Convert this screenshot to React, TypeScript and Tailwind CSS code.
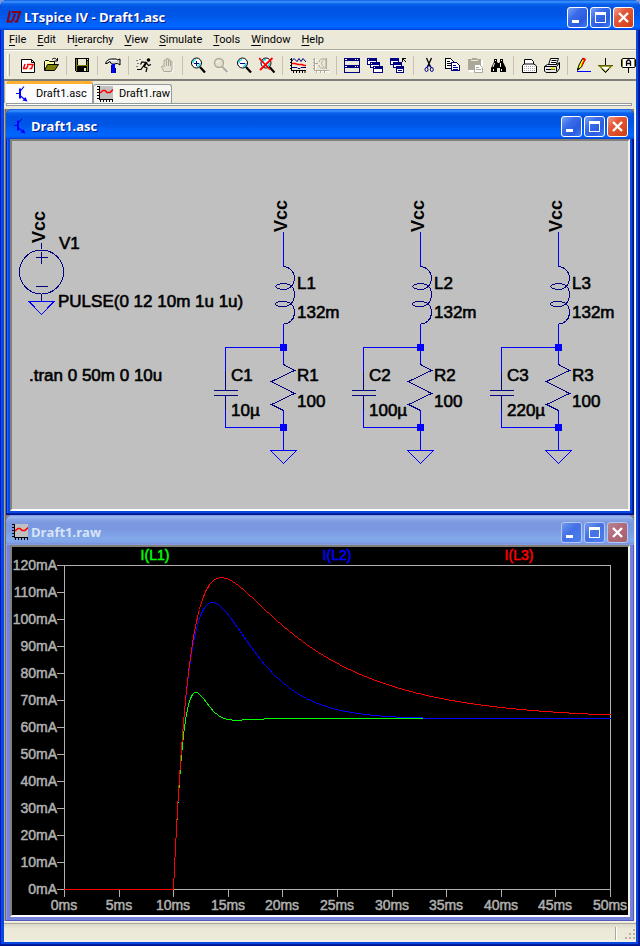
import React from "react";

const UI_FONT = "font-['Roboto','DejaVu_Sans_Condensed',sans-serif]";
const TITLE_FONT = "font-['Open_Sans','DejaVu_Sans_Condensed',sans-serif]";
const NAVY = "#000080";

/* ---------- small drawings ---------- */

function LogoIcon() {
  return (
    <svg className="h-4 w-4 shrink-0" viewBox="0 0 16 16" fill="none" stroke="#8b0010" strokeWidth="2" aria-hidden="true">
      <path d="M5 2 2.500 12.500h5" />
      <path d="M7 3h8l-3 9.500H9.500M10 5 7.500 12" />
    </svg>
  );
}

function TransistorIcon() {
  return (
    <svg className="h-4 w-4 shrink-0" viewBox="0 0 16 16" fill="none" stroke="#0000ff" aria-hidden="true">
      <path d="M2 7.500h4M6 5.500 10 .5M6 9.500l6 5" strokeWidth="1.200" />
      <path d="M6 2.500v10" strokeWidth="2" />
      <path d="m11.500 11 2 4.500-5-1z" fill="#0000ff" stroke="none" />
    </svg>
  );
}

function PlotIcon() {
  return (
    <svg className="h-4 w-4 shrink-0" viewBox="0 0 16 16" fill="none" aria-hidden="true">
      <path d="M2 0h14v13H2z" fill="#c0c0c0" />
      <g shapeRendering="crispEdges" stroke="#000">
        <path d="M2.500 0v14M2 13.500h14M0 .5h2M0 3.500h2M0 6.500h2M0 9.500h2M0 12.500h2" />
        <path d="M3.500 14v2M6.500 14v2M9.500 14v2M12.500 14v2M15.500 14v2" />
      </g>
      <path d="m3 7 3-2.500h2l2 2h3l3-3" stroke="#f00" strokeWidth="1.600" />
    </svg>
  );
}

const icons: Record<string, React.ReactNode> = {
  "New schematic": (
    <>
      <path d="M1.500 2.500h10l3 3v10h-13z" fill="#fff" stroke="#000" />
      <path d="M11.500 2.500v3h3" stroke="#000" />
      <path d="m5 7-1.500 4.500h3L8 8.500M7 7.500h6l-1.500 4H9.500" stroke="#f00" strokeWidth="1.500" />
    </>
  ),
  Open: (
    <>
      <path d="M1.500 13V4.500l1-1h3l1 1h5V8" fill="#ffffa0" stroke="#000" />
      <path d="m1.500 13.500 3-6h11l-4 6z" fill="#808000" stroke="#000" />
      <path d="M9 2.500c2-2 4-1.500 5 1M14.500 1v3h-3" stroke="#000" />
    </>
  ),
  Save: (
    <g shapeRendering="crispEdges">
      <path d="M1 1h14v14H2l-1-1z" fill="#000" />
      <path d="M2 2h1v12H2zM13 4h1v10h-1zM3 8h10v1H3z" fill="#808000" />
      <path d="M4 2h8v6H4z" fill="#ece9d8" />
      <path d="M10 11h2v3h-2zM13 2h1v1h-1z" fill="#ece9d8" />
    </g>
  ),
  "Control panel": (
    <>
      <path d="M.5 6.500c1-3 3-4.500 6-4.500h5l1 1 2.500-1v6l-2.500-1.500H11L10 7H6.500L5 4.500 2 6.500z" fill="#d8d8d8" stroke="#000" />
      <path d="M4 3.500h8" stroke="#fff" />
      <path d="M7 7h3v9H7z" fill="#0000ff" />
      <path d="M6.500 8v8M10.500 11v5" stroke={NAVY} />
    </>
  ),
  Run: (
    <>
      <circle cx="12.500" cy="3" r="1.800" fill="#000" />
      <path d="m10.500 5-3 5" stroke="#000" strokeWidth="2.200" />
      <path d="M10 5.500 6 5 4.500 7.500M10.500 6l2 2.500 2.500-1M8 9.500l3 1.500-1 4M7 9.500 5 12.500H1" stroke="#000" strokeWidth="1.200" />
      <path d="M0 3.500h2M3 2.500h3M1 6.500h2M0 9.500h3" stroke="#808080" strokeDasharray="2 1" />
    </>
  ),
  Halt: (
    <>
      <path d="M6 15.500 2.500 10c0-1 1.500-1.500 2.500 0V4c0-1.500 2-1.500 2 0V2.500c0-1.500 2-1.500 2 0V3c0-1.500 2-1.500 2 0v2c0-1.500 2-1.500 2 0v7l-1 3.500z" fill="#ece9d8" stroke="#fff" transform="translate(1 1)" />
      <path d="M5 14.500 2.500 10c0-1 1.500-1.500 2.500 0V4c0-1.500 2-1.500 2 0V2.500c0-1.500 2-1.500 2 0V3c0-1.500 2-1.500 2 0v2c0-1.500 2-1.500 2 0v7l-1 2.500zM7.500 4v5M9.500 3v6M11.500 4v5" fill="#e4e1d0" stroke="#aca899" />
    </>
  ),
  "Zoom in": (
    <>
      <circle cx="6.500" cy="6" r="5" fill="#fff" stroke="#000" />
      <path d="M3 6a3.500 3.500 0 0 1 3-3.500M7 9.500A3.500 3.500 0 0 0 10 6" stroke="#00d8e8" strokeWidth="1.200" />
      <path d="M4 6.500h5M6.500 4v5" stroke={NAVY} />
      <path d="m10 10 5 5.500" stroke="#000" strokeWidth="2.200" />
    </>
  ),
  Pan: (
    <>
      <circle cx="6.500" cy="7" r="4.500" stroke="#fff" />
      <circle cx="6" cy="6" r="4.500" fill="#e4e1d0" stroke="#aca899" strokeWidth="1.400" />
      <path d="m10.500 10.500 5 5" stroke="#fff" strokeWidth="2.500" />
      <path d="m9.500 10 5 5" stroke="#aca899" strokeWidth="2" />
      <path d="M3.500 6 6 3.500" stroke="#fff" />
    </>
  ),
  "Zoom out": (
    <>
      <circle cx="6.500" cy="6" r="5" fill="#fff" stroke="#000" />
      <path d="M3 6a3.500 3.500 0 0 1 3-3.500M7 9.500A3.500 3.500 0 0 0 10 6" stroke="#00d8e8" strokeWidth="1.200" />
      <path d="M4 6.500h5" stroke={NAVY} />
      <path d="m10 10 5 5.500" stroke="#000" strokeWidth="2.200" />
    </>
  ),
  "Zoom full extents": (
    <>
      <circle cx="7" cy="6" r="5" fill="#fff" stroke="#000" />
      <path d="M3.500 6A3.500 3.500 0 0 1 7 2.500M7 9.500A3.500 3.500 0 0 0 10.500 6" stroke="#00d8e8" strokeWidth="1.400" />
      <path d="m10.500 10 5 5.500" stroke="#000" strokeWidth="2.200" />
      <path d="m0 1 11 11.500M13.500 1 1 13" stroke="#f00" strokeWidth="1.800" />
    </>
  ),
  "Pick visible traces": (
    <>
      <path d="M1.500 1v13M1 13.500h15" stroke="#000" />
      <path d="M0 2.500h1M0 5.500h1M0 8.500h1M0 11.500h1M3.500 14v2M6.500 14v2M9.500 14v2M12.500 14v2M15 14v2" stroke="#000" />
      <path d="m2 4 2-2.500 3 3 2-3 2 3 2-3L16 5" stroke={NAVY} />
      <path d="M2 6.500h3l3 1h4l2 1h2" stroke="#f00" strokeWidth="1.400" />
      <path d="M2 10.500h5l1 1h2l1-1h5" stroke={NAVY} />
    </>
  ),
  FFT: (
    <>
      <path d="M2.500 2v13M2 14.500h14M4.500 15v1M8.500 15v1M12.500 15v1M15.500 15v1" stroke="#fff" />
      <path d="M1.500 1v13M1 13.500h15M0 2.500h1M0 5.500h1M0 8.500h1M0 11.500h1M3.500 14v2M7.500 14v2M11.500 14v2M2 6.500h3M6 5c1-4 4-3 7-3v9c-3 0-7 1-7-3M10.500 3C8 5 8 8 11 10M13.500 1v11" stroke="#aca899" />
    </>
  ),
  "Tile windows": (
    <g shapeRendering="crispEdges">
      <path d="M.5 1.500h15v14H.5z" fill="#ece9d8" stroke={NAVY} />
      <path d="M0 1h16v3H0zM0 8h16v3H0z" fill={NAVY} />
      <path d="M1 2h2v1H1zM11 2h1v1h-1zM13 2h1v1h-1zM1 9h2v1H1zM11 9h1v1h-1zM13 9h1v1h-1z" fill="#fff" />
    </g>
  ),
  "Cascade windows": (
    <g shapeRendering="crispEdges" stroke={NAVY} fill="#fff">
      <path d="M.5 1.500h9v6h-9zM3.500 5.500h9v5h-9zM6.500 9.500h9v6h-9z" />
      <path d="M0 2.500h10M3 6.500h10M6 10.500h10" strokeWidth="2" />
      <path d="M1 2.500h1M4 6.500h1M7 10.500h1" stroke="#fff" />
    </g>
  ),
  "Close all windows": (
    <g shapeRendering="crispEdges" stroke={NAVY} fill="#fff">
      <path d="M.5 1.500h8v6h-8zM3.500 5.500h8v5h-8zM6.500 9.500h7v6h-7z" />
      <path d="M0 2.500h9M3 6.500h9M6 10.500h8" strokeWidth="2" />
      <path d="M8 13.500h4" />
      <path d="M12.500 5V1.500H16M13 2l3 3" stroke="#000" fill="none" />
    </g>
  ),
  Cut: (
    <>
      <path d="m5.500 1 4 9M10.500 1l-4 9" stroke="#000" strokeWidth="1.300" />
      <path d="m7.500 8-2 3M8.500 8l2 3" stroke={NAVY} strokeWidth="1.300" />
      <ellipse cx="5.500" cy="12.500" rx="1.500" ry="2" stroke={NAVY} />
      <ellipse cx="10.800" cy="12.500" rx="1.500" ry="2" stroke={NAVY} />
    </>
  ),
  Copy: (
    <g shapeRendering="crispEdges">
      <path d="M1.500 1.500h5l3 3v7h-8z" fill="#fff" stroke="#000" />
      <path d="M3 4.500h3M3 6.500h4M3 8.500h4" stroke="#000" />
      <path d="M7.500 5.500h5l3 3v5h-8z" fill="#fff" stroke={NAVY} />
      <path d="M9 8.500h3M9 10.500h5M9 12.500h5" stroke={NAVY} />
    </g>
  ),
  Paste: (
    <>
      <path d="M2 3h14v12H2z" fill="#fff" />
      <path d="M1 2h4V1h5v1h4v11H1z" fill="#aca899" />
      <path d="M4 3.500h7" stroke="#ece9d8" />
      <path d="M7.500 7.500h5l3 3v5h-8z" fill="#fff" stroke="#aca899" />
      <path d="M9 10.500h3M9 12.500h5" stroke="#aca899" />
    </>
  ),
  Find: (
    <>
      <path d="M4 2h3v3l1 1h1l1-1V2h3v3l3 6v4h-6v-4H7v4H1v-4l3-6z" fill="#000" />
      <path d="M4.500 6 3 10M10.500 6v4M3.500 12v2M11.500 12v2M5.500 3v1M11.500 3v1" stroke="#fff" />
    </>
  ),
  "Print setup": (
    <>
      <path d="M3.500 7.500v-5h7l2 2v3" fill="#fff" stroke="#000" />
      <path d="M1.500 8.500 3 7h10l2.500 2v6.500h-14z" fill="#fff" stroke="#000" />
      <path d="M3 9.500h11M3 11.500h11M3 13.500h11" stroke="#aaa" strokeDasharray="1 1" />
    </>
  ),
  Print: (
    <>
      <path d="m4.500 8 2-6.500h8L12 8" fill="#fff" stroke="#000" />
      <path d="M7.500 3.500h5M7 5.500h5" stroke="#000" />
      <path d="m.5 9.500 3-2h9l3-2v6l-3 4H2l-1.500-1.500z" fill="#e8e8e8" stroke="#000" />
      <path d="M.5 9.500h12v5M13 9l2.500-3M2 12.500h9" stroke="#000" />
      <path d="M7 11.500h4" stroke="#e8e800" strokeWidth="2" />
    </>
  ),
  "Draw wire": (
    <>
      <path d="M2 14.500h14" stroke="#0000ff" />
      <path d="M2.500 13 4 8l3.500-6.500 2.500 1L6.500 10z" fill="#ff0" stroke="#000" />
      <path d="m7 8 3-5.500" stroke="#f00" strokeWidth="1.400" />
      <path d="m7.500 1.500 3 1.500" stroke="#f00" strokeWidth="2" />
      <path d="m2 14 .5-3 2 1z" fill="#000" />
    </>
  ),
  "Place ground": (
    <>
      <path d="M7.500 1v7M0 8.500h15" stroke="#000" />
      <path d="m1.500 9 6 6 6-6z" fill="#fff" stroke="#808000" strokeWidth="1.400" />
      <path d="m4 12 3.500 3.500L11 12" stroke="#000" />
    </>
  ),
  "Label net": (
    <>
      <path d="m.5 2.500 1-1h12l1 1v7l-1 1h-12l-1-1z" fill="#fff" stroke="#000" />
      <path d="M1.500 2v8M13.500 2v8" stroke="#808000" />
      <path d="M7.500 11v5" stroke="#000" />
      <path d="M5.500 9V4.500L7 3h1l1.500 1.500V9M5.500 6.500h4" stroke="#000" strokeWidth="1.300" />
    </>
  ),
};

const toolGroups = [
  ["New schematic", "Open"],
  ["Save"],
  ["Control panel"],
  ["Run", "Halt"],
  ["Zoom in", "Pan", "Zoom out", "Zoom full extents"],
  ["Pick visible traces", "FFT"],
  ["Tile windows", "Cascade windows", "Close all windows"],
  ["Cut", "Copy", "Paste", "Find"],
  ["Print setup", "Print"],
  ["Draw wire", "Place ground", "Label net"],
];

/* ---------- window chrome ---------- */

function CaptionButton({ kind, dim }: { kind: "Minimize" | "Maximize" | "Close"; dim?: boolean }) {
  const blue = "bg-[linear-gradient(135deg,#7ba2f0_0%,#3a6cea_35%,#2a5be0_70%,#3f7df5_100%)]";
  const blueDim = "bg-[linear-gradient(135deg,#6f98ee_0%,#4470e4_45%,#4a80f0_100%)]";
  const red = "bg-[linear-gradient(135deg,#f0a08a_0%,#e3593a_35%,#d94820_75%,#c83a10_100%)]";
  const redDim = "bg-[linear-gradient(135deg,#b88494_0%,#b06878_50%,#a8606c_100%)]";
  const fill = kind === "Close" ? (dim ? redDim : red) : dim ? blueDim : blue;
  const edge = dim ? "border-[#b4c8f4]" : "border-white";
  return (
    <button type="button" aria-label={kind} className={`flex h-[21px] w-[21px] items-center justify-center rounded-[3px] border ${edge} ${fill}`}>
      <svg className="h-[19px] w-[19px]" viewBox="0 0 19 19" fill="none" stroke="#fff" aria-hidden="true">
        {kind === "Minimize" && <path d="M4 13.500h7" strokeWidth="3" />}
        {kind === "Maximize" && (
          <g shapeRendering="crispEdges">
            <path d="M4.500 4.500h10v10h-10z" />
            <path d="M4 5.500h11" strokeWidth="3" />
          </g>
        )}
        {kind === "Close" && <path d="m5 5 9 9M14 5l-9 9" strokeWidth="2.400" />}
      </svg>
    </button>
  );
}

function TitleBar({ title, icon, dim, main }: { title: string; icon: React.ReactNode; dim?: boolean; main?: boolean }) {
  const active =
    "bg-[linear-gradient(#0a5ae0_0%,#3d95ff_6%,#0a62ec_13%,#0054e3_25%,#0055e5_50%,#0062f8_72%,#0066ff_88%,#005bf5_94%,#003dd7_100%)] text-white";
  const inactive =
    "bg-[linear-gradient(#7b99e1_0%,#9cb8ee_7%,#88a6e6_14%,#7a96df_28%,#7b99e1_50%,#82a9e9_80%,#80a5e7_90%,#7a93df_96%,#8ea4e4_100%)] text-[#d8e4f8]";
  return (
    <div className={`flex h-[30px] items-center rounded-t-[7px] pr-1.5 pt-1 ${main ? "pl-[5px]" : "pl-1.5"} ${dim ? inactive : active}`}>
      {icon}
      <h2 className={`min-w-0 flex-1 truncate pl-[3px] text-[13px] font-bold ${TITLE_FONT} ${dim ? "" : "[text-shadow:1px_1px_#0a1883]"}`}>{title}</h2>
      <div className="flex shrink-0 gap-0.5">
        <CaptionButton kind="Minimize" dim={dim} />
        <CaptionButton kind="Maximize" dim={dim} />
        <CaptionButton kind="Close" dim={dim} />
      </div>
    </div>
  );
}

function ChildWindow({ title, icon, dim, children }: { title: string; icon: React.ReactNode; dim?: boolean; children: React.ReactNode }) {
  const frame = dim
    ? "bg-[#7482dc] shadow-[inset_-1px_-1px_#5458b8,inset_1px_0_#8c98e0]"
    : "bg-[#0848e0] shadow-[inset_-1px_-1px_#00138c,inset_1px_0_#0019cf,inset_-2px_-2px_#0020a8,inset_2px_0_#166aee]";
  return (
    <section aria-label={title} className={`rounded-t-[7px] ${frame}`}>
      <TitleBar title={title} icon={icon} dim={dim} />
      <div className="px-1 pb-1">
        <div className="border-2 border-b-white border-l-[#808078] border-r-[#f4f2e8] border-t-[#808078]">{children}</div>
      </div>
    </section>
  );
}

/* ---------- schematic ---------- */

const branches = [
  { n: 1, x: 283, capX: 225, cap: "10µ" },
  { n: 2, x: 420, capX: 363, cap: "100µ" },
  { n: 3, x: 558, capX: 501, cap: "220µ" },
];

function Branch({ n, x, capX, cap }: { n: number; x: number; capX: number; cap: string }) {
  const c = x + 0.5;
  const k = capX + 0.5;
  return (
    <g>
      <g stroke="#0000ff" shapeRendering="crispEdges">
        <path d={`M${c} 232V267M${c} 324V365M${c} 410V450M${k} 372V347.500H${c}M${k} 410V427.500H${c}`} />
        <path d={`M${c - 13} 450.500h26l-13 13z`} />
        <path d={`M${x - 3} 344h7v7h-7zM${x - 3} 424h7v7h-7z`} fill="#0000ff" stroke="none" />
      </g>
      <g stroke={NAVY} shapeRendering="crispEdges">
        <path d={`M${k} 372V390M${k} 396V410M${k - 12} 390.500h24M${k - 12} 395.500h24`} />
        <path d={`M${c} 364.500l11 6-23 11 23 12-23 11 12 6`} />
        <path
          transform={`translate(${c} 0)`}
          d="M0 266.500C5 266.500 11 271 11 278C11 284 7 289.500 0 289.500C-4 289.500-8 288-8 286.500C-8 285-4 283.500 0 283.500C7 283.500 11 288 11 295C11 301 7 306.500 0 306.500C-4 306.500-8 305.500-8 304C-8 302.500-4 301.500 0 301.500C7 301.500 11 306 11 313C11 319 6 324 0 324"
        />
      </g>
      <g fill="#000" fontSize="17" stroke="#000" strokeWidth="0.600">
        <text x={x + 14} y="289">L{n}</text>
        <text x={x + 14} y="318">132m</text>
        <text x={x + 14} y="381">R{n}</text>
        <text x={x + 14} y="407">100</text>
        <text x={capX + 6} y="381">C{n}</text>
        <text x={capX + 6} y="416">{cap}</text>
      </g>
      <text transform={`translate(${x + 4} 232) rotate(-90)`} fontSize="18" fontWeight="bold" fill="#000">Vcc</text>
    </g>
  );
}

function Schematic() {
  return (
    <svg className="block h-auto w-full bg-[#c0c0c0] font-['Liberation_Sans',Arial,sans-serif]" viewBox="12 141 616 368" fill="none" role="img" aria-label="RLC schematic">
      <g stroke={NAVY} shapeRendering="crispEdges">
        <circle cx="41.500" cy="272" r="22" />
        <path d="M41.500 243v6M41.500 294v7M36 257.500h12M41.500 252v12M36 286.500h12" />
        <path d="M29 301.500h25l-12.500 13z" stroke="#0000ff" />
      </g>
      <text transform="translate(45 243) rotate(-90)" fontSize="18" fontWeight="bold" fill="#000">Vcc</text>
      <g fill="#000" fontSize="17" stroke="#000" strokeWidth="0.600">
        <text x="59" y="249">V1</text>
        <text x="58" y="307">PULSE(0 12 10m 1u 1u)</text>
        <text x="29" y="381">.tran 0 50m 0 10u</text>
      </g>
      {branches.map((b) => (
        <Branch key={b.n} {...b} />
      ))}
    </svg>
  );
}

/* ---------- waveform plot ---------- */

const X0 = 64;
const Y0 = 889;
const PX_PER_MS = 10.92;
const PX_PER_MA = 2.7;

// Inductor current after a 12 V step at 10 ms, into R || C behind the coil.
function trace(capFarad: number) {
  const L = 0.132;
  const R = 100;
  const Rs = 90;
  const steps = 200;
  const dt = 1 / PX_PER_MS / 1000 / steps;
  let i = 0;
  let v = 0;
  const pts = [`${X0},${Y0 + 0.5}`, `173,${Y0 + 0.5}`];
  for (let x = 173; x <= 610; x++) {
    pts.push(`${x + 0.5},${Math.round(Y0 - i * 1000 * PX_PER_MA) + 0.5}`);
    for (let s = 0; s < steps; s++) {
      i += ((12 - Rs * i - v) / L) * dt;
      v += ((i - v / R) / capFarad) * dt;
    }
  }
  return pts.join(" ");
}

const traces = [
  { name: "I(L1)", color: "#00ff00", cap: 10e-6, x: 155 },
  { name: "I(L2)", color: "#0000ff", cap: 100e-6, x: 337 },
  { name: "I(L3)", color: "#ff0000", cap: 220e-6, x: 519 },
];

function Plot() {
  const mA = Array.from({ length: 13 }, (_, k) => k * 10);
  const ms = Array.from({ length: 11 }, (_, k) => k * 5);
  return (
    <svg className="block h-auto w-full bg-black font-['Liberation_Sans',Arial,sans-serif]" viewBox="12 547 616 368" fill="none" fontSize="14" role="img" aria-label="Inductor currents over time">
      <g stroke="#b0b0b0" shapeRendering="crispEdges">
        <path d="M64.500 565.500H610.500V889.500H64.500z" />
        {mA.map((m) => (
          <path key={m} d={`M57 ${Y0 - m * PX_PER_MA + 0.5}h7`} />
        ))}
        {ms.map((t) => (
          <path key={t} d={`M${Math.round(X0 + t * PX_PER_MS) + 0.5} 889v8`} />
        ))}
      </g>
      <g fill="#b0b0b0" stroke="#b0b0b0" strokeWidth="0.500">
        {mA.map((m) => (
          <text key={m} x="57" y={Math.round(Y0 - m * PX_PER_MA) + 5} textAnchor="end">{m}mA</text>
        ))}
        {ms.map((t) => (
          <text key={t} x={Math.round(X0 + t * PX_PER_MS)} y="910" textAnchor="middle">{t}ms</text>
        ))}
      </g>
      {traces.map((t) => (
        <g key={t.name}>
          <text x={t.x} y="560" textAnchor="middle" fill={t.color} stroke={t.color} strokeWidth="0.500">{t.name}</text>
          <polyline points={trace(t.cap)} stroke={t.color} shapeRendering="crispEdges" />
        </g>
      ))}
    </svg>
  );
}

/* ---------- application ---------- */

const menus: [string, string, string][] = [
  ["", "F", "ile"],
  ["", "E", "dit"],
  ["H", "i", "erarchy"],
  ["", "V", "iew"],
  ["", "S", "imulate"],
  ["", "T", "ools"],
  ["", "W", "indow"],
  ["", "H", "elp"],
];

export default function App() {
  return (
    <div className="bg-[#7a96df]">
      <main className={`rounded-t-[8px] bg-[#0848e0] text-[11px] leading-4 text-black shadow-[inset_-1px_-1px_#00138c,inset_1px_0_#0019cf,inset_-2px_-2px_#001ea0,inset_2px_0_#0c4ae0] ${UI_FONT}`}>
        <TitleBar main title="LTspice IV - Draft1.asc" icon={<LogoIcon />} />
        <div className="px-1 pb-1">
          <div className="bg-[#ece9d8]">
            <nav className="flex h-5 items-center gap-px border-b border-[#aca899]">
              {menus.map(([a, b, c]) => (
                <button type="button" key={a + b + c} className="px-[5px]">
                  {a}
                  <span className="underline underline-offset-2">{b}</span>
                  {c}
                </button>
              ))}
            </nav>
            <div role="toolbar" className="flex h-[31px] items-center overflow-hidden border-b-2 border-t border-b-[#808078] border-t-white pl-[3px]">
              <span className="mr-[6px] h-[22px] w-[3px] shrink-0 border-l border-r border-l-white border-r-[#aca899]" />
              {toolGroups.map((group, g) => (
                <React.Fragment key={group[0]}>
                  {g > 0 && <span className="flex w-2 shrink-0 justify-center"><span className="h-[19px] w-px bg-[#c5c2b2]" /></span>}
                  {group.map((name) => (
                    <button type="button" key={name} aria-label={name} className="w-[23px] shrink-0 pl-1">
                      <svg className="block h-4 w-4" viewBox="0 0 16 16" fill="none" aria-hidden="true">{icons[name]}</svg>
                    </button>
                  ))}
                </React.Fragment>
              ))}
            </div>
            <div role="tablist" className="flex h-[22px] items-end border-l border-[#aca899] pl-px">
              <button type="button" role="tab" aria-selected="true" className="flex h-[22px] w-[87px] items-center rounded-t-[3px] border-r border-t-[3px] border-r-[#919b9c] border-t-[#ffb030] bg-[#fcfcfe] pl-2">
                <TransistorIcon />
                <span className="pl-1.5">Draft1.asc</span>
              </button>
              <button type="button" role="tab" aria-selected="false" className="flex h-[19px] w-[79px] items-center rounded-t-[3px] border border-b-0 border-[#919b9c] bg-[#f6f5ef] pl-[3px]">
                <PlotIcon />
                <span className="pl-1.5">Draft1.raw</span>
              </button>
            </div>
            <div className="mr-1 ml-[2px] h-[3px] border border-[#919b9c] bg-white" />
            <div className="h-[3px]" />
            <div className="border-l border-r border-l-[#aca899] border-r-white">
              <div className="border-l border-r border-l-[#716f64] border-r-[#ece9d8] bg-[#808080]">
                <ChildWindow title="Draft1.asc" icon={<TransistorIcon />}>
                  <Schematic />
                </ChildWindow>
                <ChildWindow title="Draft1.raw" dim icon={<PlotIcon />}>
                  <Plot />
                </ChildWindow>
              </div>
            </div>
            <footer className="flex h-[21px] items-end justify-end border-t border-[#f4f2e8]">
              <div className="flex h-[19px] flex-1 items-center justify-end border-t border-[#aca899] bg-[linear-gradient(#dcd9c8,#ece9d8_30%,#ece9d8_80%,#f4f2e8)]">
                <span className="h-[13px] w-0.5 border-l border-[#aca899] bg-white" />
                <svg className="ml-1.5 h-[13px] w-[13px]" viewBox="0 0 13 13" shapeRendering="crispEdges" aria-hidden="true">
                  <path d="M10 2h2v2h-2zM6 6h2v2H6zM10 6h2v2h-2zM2 10h2v2H2zM6 10h2v2H6zM10 10h2v2h-2z" fill="#b8b4a3" />
                </svg>
              </div>
            </footer>
          </div>
        </div>
      </main>
    </div>
  );
}
